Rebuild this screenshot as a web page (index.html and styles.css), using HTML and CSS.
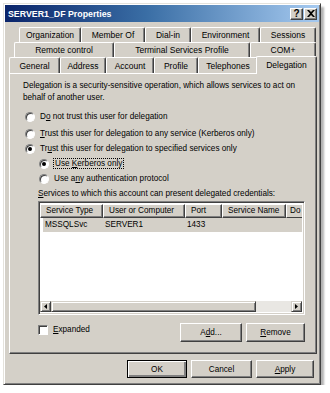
FILE: index.html
```html
<!DOCTYPE html>
<html lang="en">
<head>
    <meta charset="UTF-8">
    <meta name="viewport" content="width=device-width, initial-scale=1.0">
    <title>SERVER1_DF Properties</title>
    <link rel="stylesheet" href="styles.css">
</head>
<body>
    <div class="window">
        <div class="titlebar">
            <span class="title">SERVER1_DF Properties</span>
            <div class="caption-buttons">
                <span class="cap-btn help">?</span>
                <span class="cap-btn close">
                    <svg width="8" height="7" viewBox="0 0 8 7"><path d="M0 0h2l2 2 2-2h2L5 3.5 8 7H6L4 5 2 7H0l3-3.5z" fill="#000"/></svg>
                </span>
            </div>
        </div>

        <div class="tabs">
            <div class="tab-row row-1">
                <span class="tab w62">Organization</span>
                <span class="tab w64">Member Of</span>
                <span class="tab w46">Dial-in</span>
                <span class="tab w69">Environment</span>
                <span class="tab w56">Sessions</span>
            </div>
            <div class="tab-row row-2">
                <span class="tab w100">Remote control</span>
                <span class="tab w136">Terminal Services Profile</span>
                <span class="tab w66">COM+</span>
            </div>
            <div class="tab-row row-3">
                <span class="tab w51">General</span>
                <span class="tab w46">Address</span>
                <span class="tab w48">Account</span>
                <span class="tab w44">Profile</span>
                <span class="tab w60">Telephones</span>
                <span class="tab active">Delegation</span>
            </div>
        </div>

        <div class="panel">
            <p class="intro">Delegation is a security-sensitive operation, which allows services to act on behalf of another user.</p>

            <div class="options">
                <label class="radio-row"><span class="radio"></span><span>D<u>o</u> not trust this user for delegation</span></label>
                <label class="radio-row gap"><span class="radio"></span><span><u>T</u>rust this user for delegation to any service (Kerberos only)</span></label>
                <label class="radio-row"><span class="radio checked"></span><span>Tr<u>u</u>st this user for delegation to specified services only</span></label>
                <label class="radio-row sub"><span class="radio checked"></span><span class="focus">Use <u>K</u>erberos only</span></label>
                <label class="radio-row sub"><span class="radio"></span><span>Use a<u>n</u>y authentication protocol</span></label>
            </div>

            <div class="services-label"><u>S</u>ervices to which this account can present delegated credentials:</div>

            <div class="listview">
                <div class="lv-body">
                    <div class="lv-header">
                        <span class="col c1">Service Type</span>
                        <span class="col c2">User or Computer</span>
                        <span class="col c3">Port</span>
                        <span class="col c4">Service Name</span>
                        <span class="col c5">Do</span>
                    </div>
                    <div class="lv-row selected">
                        <span class="cell c1">MSSQLSvc</span>
                        <span class="cell c2">SERVER1</span>
                        <span class="cell c3">1433</span>
                        <span class="cell c4"></span>
                    </div>
                </div>
                <div class="hscroll">
                    <span class="sb-btn"><svg width="3" height="5" viewBox="0 0 3 5"><path d="M3 0v5L0 2.5z" fill="#000"/></svg></span>
                    <span class="sb-thumb"></span>
                    <span class="sb-track"></span>
                    <span class="sb-btn"><svg width="3" height="5" viewBox="0 0 3 5"><path d="M0 0v5l3-2.5z" fill="#000"/></svg></span>
                </div>
            </div>

            <div class="list-actions">
                <label class="check-row"><span class="checkbox"></span><span><u>E</u>xpanded</span></label>
                <div class="action-buttons">
                    <button class="btn add">A<u>d</u>d...</button>
                    <button class="btn remove"><u>R</u>emove</button>
                </div>
            </div>
        </div>

        <div class="dialog-buttons">
            <button class="btn default">OK</button>
            <button class="btn cancel">Cancel</button>
            <button class="btn apply"><u>A</u>pply</button>
        </div>
    </div>
</body>
</html>
```

FILE: styles.css
```css
* {
    box-sizing: border-box;
}
body {
    margin: 0;
    background: #fff;
    font-family: "Liberation Sans", Arial, sans-serif;
    font-size: 8.2px;
    color: #000;
}
u {
    text-decoration: underline;
    text-underline-offset: 1px;
}
.window {
    margin: 3px 0 0 3px;
    width: 318px;
    height: 382px;
    background: #d4d0c8;
    border: 1px solid;
    border-color: #e4e2dc #404040 #404040 #e4e2dc;
    box-shadow: inset 1px 1px #fff, inset -1px -1px #808080, 3px 4px 2px rgba(0, 0, 0, 0.3);
    padding: 1px;
    display: flex;
    flex-direction: column;
}

/* title bar */
.titlebar {
    height: 17px;
    background: linear-gradient(to right, #0a246a, #3a6ea5 45%, #a6caf0);
    display: flex;
    align-items: center;
    justify-content: space-between;
    padding: 0 2px 0 3px;
}
.title {
    color: #fff;
    font-weight: bold;
    font-size: 8.8px;
}
.caption-buttons {
    display: flex;
    gap: 1px;
}
.cap-btn {
    width: 13px;
    height: 12px;
    background: #d4d0c8;
    border: 1px solid;
    border-color: #fff #404040 #404040 #fff;
    box-shadow: inset -1px -1px #808080;
    display: flex;
    align-items: center;
    justify-content: center;
    font-weight: bold;
    font-size: 10px;
    line-height: 1;
}

/* tabs */
.tabs {
    margin-top: 5px;
    display: flex;
    flex-direction: column;
    font-size: 8.5px;
}
.tab-row {
    display: flex;
    height: 15px;
}
.row-1 { margin-left: 14px; }
.row-2 { margin-left: 9px; }
.row-3 { margin-left: 4px; height: 16px; align-items: flex-end; }
.tab {
    height: 15px;
    display: flex;
    align-items: center;
    justify-content: center;
    border-top: 1px solid #fff;
    border-left: 1px solid #fff;
    border-right: 1px solid #404040;
    box-shadow: inset -1px 0 #808080;
    border-radius: 2px 2px 0 0;
    white-space: nowrap;
}
.row-3 .tab { height: 16px; }
.tab.active {
    width: 61px;
    height: 18px;
    margin: 0 0 -1px -2px;
    padding-bottom: 2px;
    position: relative;
    z-index: 1;
    background: #d4d0c8;
}
.w44 { width: 44px; }
.w46 { width: 46px; }
.w48 { width: 48px; }
.w51 { width: 51px; }
.w56 { width: 56px; }
.w60 { width: 60px; }
.w62 { width: 62px; }
.w64 { width: 64px; }
.w66 { width: 66px; }
.w69 { width: 69px; }
.w100 { width: 100px; }
.w136 { width: 136px; }

/* property page */
.panel {
    margin-left: 4px;
    width: 308px;
    height: 281px;
    border: 1px solid;
    border-color: #fff #404040 #404040 #fff;
    box-shadow: inset -1px -1px #808080;
    padding: 6px 13px 0;
}
.intro {
    margin: 0;
    line-height: 12px;
    width: 290px;
}
.options {
    margin-top: 5px;
    display: flex;
    flex-direction: column;
}
.radio-row {
    height: 15px;
    display: flex;
    align-items: center;
    gap: 5px;
    padding-left: 2px;
}
.radio-row.gap { margin-top: 2px; }
.radio-row.sub { padding-left: 16px; }
.radio {
    width: 10px;
    height: 10px;
    border-radius: 50%;
    background: #fff;
    border: 1px solid;
    border-color: #808080 #fff #fff #808080;
    box-shadow: inset 1px 1px #404040;
    display: flex;
    align-items: center;
    justify-content: center;
    flex: none;
}
.radio.checked::after {
    content: "";
    width: 4px;
    height: 4px;
    border-radius: 50%;
    background: #000;
}
.focus {
    outline: 1px dotted #000;
    outline-offset: 0;
    padding: 0 1px;
}
.services-label {
    margin: 1px 0 0 15px;
    height: 14px;
    line-height: 14px;
}

/* list view */
.listview {
    margin: 0 0 0 15px;
    width: 267px;
    height: 114px;
    border: 1px solid;
    border-color: #808080 #fff #fff #808080;
    box-shadow: inset 1px 1px #404040, inset -1px -1px #d4d0c8;
    padding: 2px 2px 2px 1px;
    display: flex;
    flex-direction: column;
    background: #fff;
}
.lv-body {
    flex: 1;
    overflow: hidden;
}
.lv-header {
    display: flex;
    height: 14px;
    background: #d4d0c8;
}
.col {
    flex: none;
    height: 14px;
    line-height: 12px;
    padding-left: 5px;
    border: 1px solid;
    border-color: #fff #404040 #404040 #fff;
    box-shadow: inset -1px -1px #808080;
    white-space: nowrap;
}
.c1 { width: 63px; }
.c2 { width: 82px; }
.c3 { width: 37px; }
.c4 { width: 64px; }
.c5 { flex: 1; padding-left: 3px; border-right: 0; box-shadow: none; }
.lv-row {
    display: flex;
    height: 14px;
    line-height: 14px;
}
.lv-row.selected {
    background: #d4d0c8;
    margin-left: 3px;
}
.cell {
    flex: none;
    padding-left: 2px;
}
.lv-row .c1 { width: 60px; }
.hscroll {
    display: flex;
    height: 11px;
}
.sb-btn {
    width: 11px;
    height: 11px;
    background: #d4d0c8;
    border: 1px solid;
    border-color: #d4d0c8 #404040 #404040 #d4d0c8;
    box-shadow: inset 1px 1px #fff, inset -1px -1px #808080;
    display: flex;
    align-items: center;
    justify-content: center;
    flex: none;
}
.sb-thumb {
    width: 205px;
    background: #d4d0c8;
    border: 1px solid;
    border-color: #d4d0c8 #404040 #404040 #d4d0c8;
    box-shadow: inset 1px 1px #fff, inset -1px -1px #808080;
    flex: none;
}
.sb-track {
    flex: 1;
    background: #e9e7e3;
}

/* buttons */
.list-actions {
    margin: 8px 0 0 15px;
    width: 267px;
    display: flex;
    align-items: center;
    justify-content: space-between;
}
.check-row {
    display: flex;
    align-items: center;
    gap: 5px;
    margin-top: -6px;
}
.checkbox {
    width: 10px;
    height: 10px;
    background: #fff;
    border: 1px solid;
    border-color: #808080 #fff #fff #808080;
    box-shadow: inset 1px 1px #404040;
}
.action-buttons {
    display: flex;
    gap: 4px;
}
.btn {
    font: inherit;
    color: #000;
    height: 19px;
    padding: 0;
    background: #d4d0c8;
    border: 1px solid;
    border-color: #fff #404040 #404040 #fff;
    box-shadow: inset -1px -1px #808080;
}
.add { width: 62px; }
.remove { width: 59px; }
.dialog-buttons {
    margin-top: 6px;
    padding-right: 5px;
    display: flex;
    justify-content: flex-end;
    gap: 4px;
}
.dialog-buttons .btn {
    height: 18px;
}
.default {
    width: 60px;
    border-color: #000;
    box-shadow: inset 1px 1px #fff, inset -2px -2px #808080, inset -1px -1px #404040;
}
.cancel { width: 61px; }
.apply { width: 58px; }
```
